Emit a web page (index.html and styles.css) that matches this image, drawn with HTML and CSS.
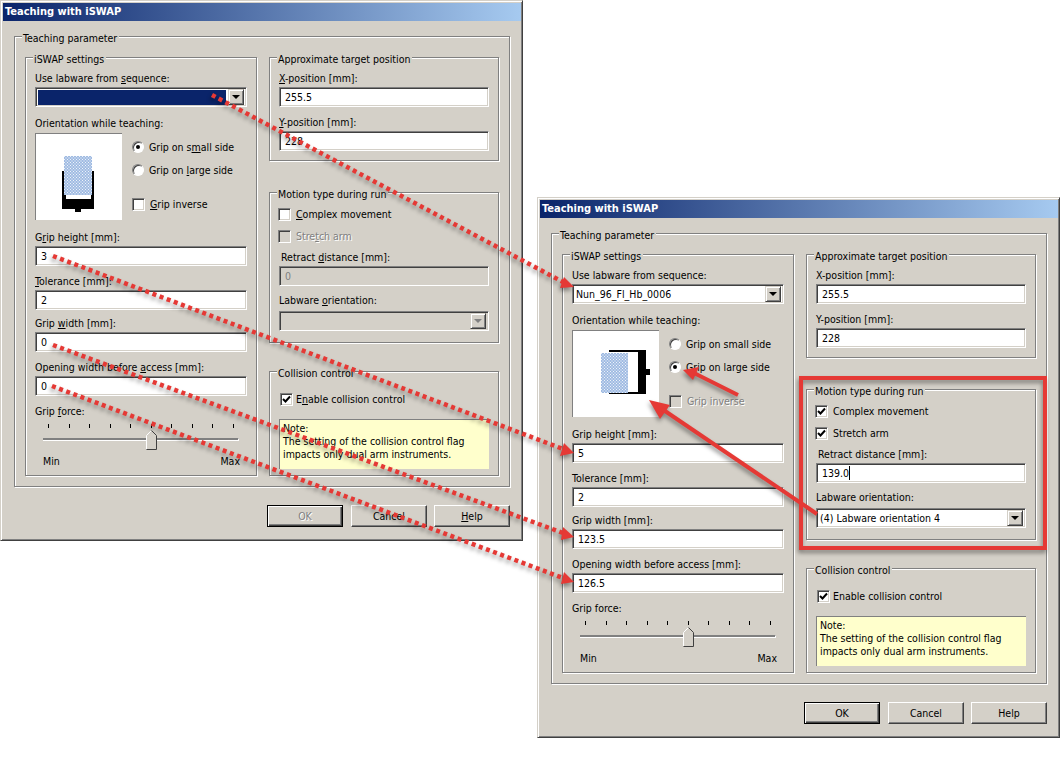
FILE: index.html
```html
<!DOCTYPE html>
<html lang="en">
<head>
  <meta charset="UTF-8">
  <title>Teaching with iSWAP</title>
  <link rel="stylesheet" href="styles.css">
</head>
<body>
  <!-- Dialog before teaching -->
  <div class="window window-before">
    <div class="title-bar">Teaching with iSWAP</div>
    <div class="group group-teaching">
      <span class="legend">Teaching parameter</span>
      <div class="columns">
        <div class="group group-iswap">
          <span class="legend">iSWAP settings</span>
          <div class="lbl">Use labware from <u>s</u>equence:</div>
          <div class="field combo combo-selected"><span class="combo-text"></span><span class="combo-btn"></span></div>
          <div class="lbl gap-9">Orientation while teaching:</div>
          <div class="orient-row">
            <div class="picture">
              <svg width="86" height="86" viewBox="0 0 86 86">
                <defs>
                  <pattern id="wells-a" width="3" height="3" patternUnits="userSpaceOnUse">
                    <rect width="3" height="3" fill="#c5d6ee"/>
                    <circle cx="1.5" cy="1.5" r="1" fill="#eef3fa" stroke="#7ea3d8" stroke-width=".7"/>
                  </pattern>
                </defs>
                <path d="M26 37h4v28h25v-28h3v38h-13v3h-6v-3h-13z" fill="#000"/>
                <rect x="28" y="22" width="28" height="39" fill="url(#wells-a)"/>
              </svg>
            </div>
            <div class="options">
              <div class="opt"><span class="radio on"></span><span>Grip on s<u>m</u>all side</span></div>
              <div class="opt"><span class="radio"></span><span>Grip on <u>l</u>arge side</span></div>
              <div class="opt opt-inverse"><span class="check"></span><span><u>G</u>rip inverse</span></div>
            </div>
          </div>
          <div class="lbl gap-10">G<u>r</u>ip height [mm]:</div>
          <div class="field"><span>3</span></div>
          <div class="lbl gap-8"><u>T</u>olerance [mm]:</div>
          <div class="field"><span>2</span></div>
          <div class="lbl gap-6">Grip <u>w</u>idth [mm]:</div>
          <div class="field"><span>0</span></div>
          <div class="lbl gap-8">Opening width before <u>a</u>ccess [mm]:</div>
          <div class="field"><span>0</span></div>
          <div class="lbl gap-8">Grip <u>f</u>orce:</div>
          <div class="slider">
            <div class="ticks"><i></i><i></i><i></i><i></i><i></i><i></i><i></i><i></i><i></i><i></i></div>
            <div class="track">
              <svg class="thumb" width="11" height="20" viewBox="0 0 11 20">
                <path d="M.5 19.5v-14l5-5 5 5v14z" fill="#d4d0c8"/>
                <path d="M.5 19v-13.500l5-5" fill="none" stroke="#fff"/>
                <path d="M5.500.5l5 5v14h-10" fill="none" stroke="#404040"/>
              </svg>
            </div>
            <div class="slider-ends"><span>Min</span><span>Max</span></div>
          </div>
        </div>
        <div class="col-right">
          <div class="group group-target">
            <span class="legend">Approximate target position</span>
            <div class="lbl"><u>X</u>-position [mm]:</div>
            <div class="field"><span>255.5</span></div>
            <div class="lbl gap-8"><u>Y</u>-position [mm]:</div>
            <div class="field"><span>228</span></div>
          </div>
          <div class="group group-motion">
            <span class="legend">Motion type during run</span>
            <div class="opt"><span class="check"></span><span><u>C</u>omplex movement</span></div>
            <div class="opt opt-next disabled"><span class="check check-off"></span><span>Stre<u>t</u>ch arm</span></div>
            <div class="lbl lbl-indent gap-7">Retract <u>d</u>istance [mm]:</div>
            <div class="field field-off"><span>0</span></div>
            <div class="lbl gap-7"><span>Labware <u>o</u>rientation:</span></div>
            <div class="field combo combo-off gap-select"><span class="combo-text"></span><span class="combo-btn"></span></div>
          </div>
          <div class="group group-collision">
            <span class="legend">Collision control</span>
            <div class="opt opt-collision"><span class="check"><svg width="11" height="11" viewBox="0 0 11 11"><path d="M2 5l2.500 2.500 4.500-5" fill="none" stroke="#000" stroke-width="2"/></svg></span><span>E<u>n</u>able collision control</span></div>
            <div class="note">Note:<br>The setting of the collision control flag<br>impacts only dual arm instruments.</div>
          </div>
        </div>
      </div>
    </div>
    <div class="buttons">
      <button class="btn btn-default btn-off">OK</button>
      <button class="btn">Cancel</button>
      <button class="btn btn-help"><u>H</u>elp</button>
    </div>
  </div>

  <!-- Dialog after teaching -->
  <div class="window window-after">
    <div class="title-bar">Teaching with iSWAP</div>
    <div class="group group-teaching">
      <span class="legend">Teaching parameter</span>
      <div class="columns">
        <div class="group group-iswap">
          <span class="legend">iSWAP settings</span>
          <div class="lbl">Use labware from sequence:</div>
          <div class="field combo"><span class="combo-text">Nun_96_Fl_Hb_0006</span><span class="combo-btn"></span></div>
          <div class="lbl gap-9">Orientation while teaching:</div>
          <div class="orient-row">
            <div class="picture">
              <svg width="86" height="86" viewBox="0 0 86 86">
                <defs>
                  <pattern id="wells-b" width="3" height="3" patternUnits="userSpaceOnUse">
                    <rect width="3" height="3" fill="#c5d6ee"/>
                    <circle cx="1.5" cy="1.5" r="1" fill="#eef3fa" stroke="#7ea3d8" stroke-width=".7"/>
                  </pattern>
                </defs>
                <path d="M36 19h37v19h4v6h-4v19h-37v-2h29v-40h-29z" fill="#000"/>
                <rect x="28" y="22" width="27" height="40" fill="url(#wells-b)"/>
              </svg>
            </div>
            <div class="options">
              <div class="opt"><span class="radio"></span><span>Grip on small side</span></div>
              <div class="opt"><span class="radio on"></span><span>Grip on large side</span></div>
              <div class="opt opt-inverse disabled"><span class="check check-off"></span><span>Grip inverse</span></div>
            </div>
          </div>
          <div class="lbl gap-10">Grip height [mm]:</div>
          <div class="field"><span>5</span></div>
          <div class="lbl gap-8">Tolerance [mm]:</div>
          <div class="field"><span>2</span></div>
          <div class="lbl gap-6">Grip width [mm]:</div>
          <div class="field"><span>123.5</span></div>
          <div class="lbl gap-8">Opening width before access [mm]:</div>
          <div class="field"><span>126.5</span></div>
          <div class="lbl gap-8">Grip force:</div>
          <div class="slider">
            <div class="ticks"><i></i><i></i><i></i><i></i><i></i><i></i><i></i><i></i><i></i><i></i></div>
            <div class="track">
              <svg class="thumb" width="11" height="20" viewBox="0 0 11 20">
                <path d="M.5 19.5v-14l5-5 5 5v14z" fill="#d4d0c8"/>
                <path d="M.5 19v-13.500l5-5" fill="none" stroke="#fff"/>
                <path d="M5.500.5l5 5v14h-10" fill="none" stroke="#404040"/>
              </svg>
            </div>
            <div class="slider-ends"><span>Min</span><span>Max</span></div>
          </div>
        </div>
        <div class="col-right">
          <div class="group group-target">
            <span class="legend">Approximate target position</span>
            <div class="lbl">X-position [mm]:</div>
            <div class="field"><span>255.5</span></div>
            <div class="lbl gap-8">Y-position [mm]:</div>
            <div class="field"><span>228</span></div>
          </div>
          <div class="group group-motion">
            <span class="legend">Motion type during run</span>
            <div class="opt"><span class="check"><svg width="11" height="11" viewBox="0 0 11 11"><path d="M2 5l2.500 2.500 4.500-5" fill="none" stroke="#000" stroke-width="2"/></svg></span><span>Complex movement</span></div>
            <div class="opt opt-next"><span class="check"><svg width="11" height="11" viewBox="0 0 11 11"><path d="M2 5l2.500 2.500 4.500-5" fill="none" stroke="#000" stroke-width="2"/></svg></span><span>Stretch arm</span></div>
            <div class="lbl lbl-indent gap-7">Retract distance [mm]:</div>
            <div class="field"><span class="caret">139.0</span></div>
            <div class="lbl gap-7">Labware orientation:</div>
            <div class="field combo gap-select"><span class="combo-text">(4) Labware orientation 4</span><span class="combo-btn"></span></div>
          </div>
          <div class="group group-collision">
            <span class="legend">Collision control</span>
            <div class="opt opt-collision"><span class="check"><svg width="11" height="11" viewBox="0 0 11 11"><path d="M2 5l2.500 2.500 4.500-5" fill="none" stroke="#000" stroke-width="2"/></svg></span><span>Enable collision control</span></div>
            <div class="note">Note:<br>The setting of the collision control flag<br>impacts only dual arm instruments.</div>
          </div>
        </div>
      </div>
    </div>
    <div class="buttons">
      <button class="btn btn-default">OK</button>
      <button class="btn">Cancel</button>
      <button class="btn btn-help">Help</button>
    </div>
  </div>

  <!-- Annotations drawn over both dialogs -->
  <svg class="annotations" width="1061" height="759" viewBox="0 0 1061 759">
    <g class="dotted">
      <path d="M212 95L563 282"/>
      <path d="M53 256L563 449"/>
      <path d="M53 345L563 533"/>
      <path d="M52 386L563 578"/>
    </g>
    <g class="heads">
      <path d="M574 287L564 277 560 288z"/>
      <path d="M574 453L564 443 560 456z"/>
      <path d="M574 537L563 527 561 540z"/>
      <path d="M574 582L564 572 561 584z"/>
      <path d="M683 370L699 367 693 380z"/>
      <path d="M649 400L670 405 660 419z"/>
    </g>
    <g class="solid">
      <path d="M738 395L694 373"/>
      <path d="M817 514L662 409"/>
      <rect x="801" y="378" width="244" height="170"/>
    </g>
  </svg>
</body>
</html>
```

FILE: styles.css
```css
html, body {
  margin: 0;
  padding: 0;
}

body {
  position: relative;
  width: 1061px;
  height: 759px;
  overflow: hidden;
  background-color: #fff;
  color: #000;
  font-family: "DejaVu Sans Condensed", "DejaVu Sans", sans-serif;
  font-stretch: condensed;
  font-size: 10.5px;
  line-height: 14px;
}

/* Windows */
.window {
  position: absolute;
  box-sizing: border-box;
  width: 523px;
  height: 541px;
  padding: 2px 1px 2px 2px;
  background-color: #d4d0c8;
  border: 1px solid;
  border-color: #d4d0c8 #404040 #404040 #d4d0c8;
  box-shadow: inset 1px 1px 0 #fff, inset -1px -1px 0 #808080;
}

.window-before {
  left: 0;
  top: 0;
}

.window-after {
  left: 537px;
  top: 197px;
}

.title-bar {
  height: 18px;
  padding-left: 2px;
  line-height: 18px;
  font-size: 11px;
  font-weight: bold;
  color: #fff;
  background: linear-gradient(to right, #0a246a, #a6caf0);
}

/* Group boxes */
.group {
  position: relative;
  box-sizing: border-box;
  border: 1px solid #808080;
  box-shadow: 1px 1px 0 #fff, inset 1px 1px 0 #fff;
}

.legend {
  position: absolute;
  top: -6px;
  left: 7px;
  height: 13px;
  padding: 0 2px 0 1px;
  background-color: #d4d0c8;
  white-space: nowrap;
}

.group-teaching {
  width: 496px;
  height: 451px;
  margin: 15px 0 0 11px;
  padding: 20px 10px 0;
}

.columns {
  display: flex;
  gap: 12px;
}

.group-iswap {
  width: 232px;
  height: 419px;
  padding: 13px 9px 0;
}

.col-right {
  width: 230px;
}

.group-target {
  height: 104px;
  padding: 13px 9px 0;
}

.group-motion {
  height: 151px;
  margin-top: 31px;
  padding: 14px 9px 0;
}

.group-collision {
  height: 105px;
  margin-top: 28px;
  padding: 20px 9px 0;
}

/* Labels and spacing */
.lbl {
  height: 14px;
  white-space: nowrap;
}

.lbl-indent {
  padding-left: 2px;
}

.gap-6 { margin-top: 6px; }
.gap-7 { margin-top: 7px; }
.gap-8 { margin-top: 8px; }
.gap-9 { margin-top: 9px; }
.gap-10 { margin-top: 10px; }

/* Sunken text fields */
.field {
  display: flex;
  align-items: center;
  box-sizing: border-box;
  height: 20px;
  margin-top: 2px;
  padding-left: 5px;
  background-color: #fff;
  border: 1px solid;
  border-color: #808080 #fff #fff #808080;
  box-shadow: inset 1px 1px 0 #404040, inset -1px -1px 0 #d4d0c8;
}

.field-off {
  background-color: #d4d0c8;
  color: #808080;
}

.caret {
  border-right: 1px solid #000;
}

/* Combo boxes */
.combo {
  padding: 0 2px;
}

.combo-text {
  flex: 1;
  padding-left: 1px;
  white-space: nowrap;
}

.combo-btn {
  position: relative;
  box-sizing: border-box;
  width: 16px;
  height: 16px;
  background-color: #d4d0c8;
  border: 1px solid;
  border-color: #d4d0c8 #404040 #404040 #d4d0c8;
  box-shadow: inset 1px 1px 0 #fff, inset -1px -1px 0 #808080;
}

.combo-btn::after {
  content: "";
  position: absolute;
  left: 3px;
  top: 5px;
  border: 4px solid transparent;
  border-top-color: #000;
  border-bottom-width: 0;
}

.combo-selected .combo-text {
  height: 15px;
  margin-right: 2px;
  background-color: #0a246a;
}

.combo-off {
  background-color: #d4d0c8;
}

.combo-off .combo-btn::after {
  border-top-color: #808080;
}

.gap-select {
  margin-top: 4px;
}

/* Orientation picture and options */
.orient-row {
  display: flex;
  margin-top: 3px;
}

.picture {
  box-sizing: border-box;
  width: 87px;
  height: 87px;
  background-color: #fff;
  border-top: 1px solid #808080;
  border-left: 1px solid #808080;
}

.picture svg {
  display: block;
}

.options {
  padding: 7px 0 0 10px;
}

.opt {
  display: flex;
  align-items: center;
  gap: 5px;
  height: 14px;
  white-space: nowrap;
}

.opt + .opt {
  margin-top: 9px;
}

.options .opt-inverse {
  margin-top: 20px;
}

.group-motion .opt {
  margin-left: -1px;
}

.group-motion .opt-next {
  margin-top: 8px;
}

.opt-collision {
  gap: 3px;
  padding-left: 1px;
}

.disabled {
  color: #808080;
  text-shadow: 1px 1px 0 #fff;
}

.radio {
  position: relative;
  box-sizing: border-box;
  width: 12px;
  height: 12px;
  background-color: #fff;
  border-radius: 50%;
  border: 1px solid;
  border-color: #808080 #fff #fff #808080;
  box-shadow: inset 1px 1px 0 #404040;
}

.radio.on::after {
  content: "";
  position: absolute;
  left: 3px;
  top: 3px;
  width: 4px;
  height: 4px;
  border-radius: 50%;
  background-color: #000;
}

.check {
  box-sizing: border-box;
  width: 13px;
  height: 13px;
  background-color: #fff;
  border: 1px solid;
  border-color: #808080 #fff #fff #808080;
  box-shadow: inset 1px 1px 0 #404040, inset -1px -1px 0 #d4d0c8;
}

.check svg {
  display: block;
}

.check-off {
  background-color: #d4d0c8;
}

/* Slider */
.slider {
  margin-top: 6px;
  padding-left: 8px;
}

.ticks {
  display: flex;
  justify-content: space-between;
  width: 186px;
  height: 4px;
  margin-left: 5px;
}

.ticks i {
  width: 1px;
  background-color: #000;
}

.track {
  position: relative;
  box-sizing: border-box;
  width: 196px;
  height: 3px;
  margin-top: 10px;
  background-color: #808080;
  border-top: 1px solid #808080;
  border-bottom: 1px solid #fff;
  border-right: 1px solid #fff;
}

.thumb {
  position: absolute;
  left: 103px;
  top: -9px;
}

.slider-ends {
  display: flex;
  justify-content: space-between;
  width: 197px;
  margin-top: 13px;
}

/* Yellow note */
.note {
  box-sizing: border-box;
  width: 210px;
  height: 50px;
  margin-top: 13px;
  padding: 2px 0 0 3px;
  line-height: 13px;
  white-space: nowrap;
  background-color: #ffffcc;
  border-top: 1px solid #808080;
  border-left: 1px solid #808080;
}

/* Buttons */
.buttons {
  display: flex;
  justify-content: flex-end;
  margin: 18px 11px 0 0;
}

.btn {
  box-sizing: border-box;
  width: 76px;
  height: 22px;
  margin-left: 8px;
  padding: 0;
  font: inherit;
  font-stretch: condensed;
  color: #000;
  background-color: #d4d0c8;
  border: 1px solid;
  border-color: #fff #404040 #404040 #fff;
  box-shadow: inset -1px -1px 0 #808080;
}

.btn-help {
  margin-left: 7px;
}

.btn-default {
  border-color: #000;
  box-shadow: inset 1px 1px 0 #fff, inset -1px -1px 0 #404040, inset -2px -2px 0 #808080;
}

.btn-off {
  color: #808080;
  text-shadow: 1px 1px 0 #fff;
}

/* Red annotations */
.annotations {
  position: absolute;
  left: 0;
  top: 0;
  filter: drop-shadow(-1px 3px 2px rgba(0, 0, 0, 0.4));
}

.dotted path {
  fill: none;
  stroke: #e53935;
  stroke-width: 4.5;
  stroke-dasharray: 4 3.6;
}

.heads path {
  fill: #e53935;
}

.solid path,
.solid rect {
  fill: none;
  stroke: #e53935;
  stroke-width: 4;
}
```
